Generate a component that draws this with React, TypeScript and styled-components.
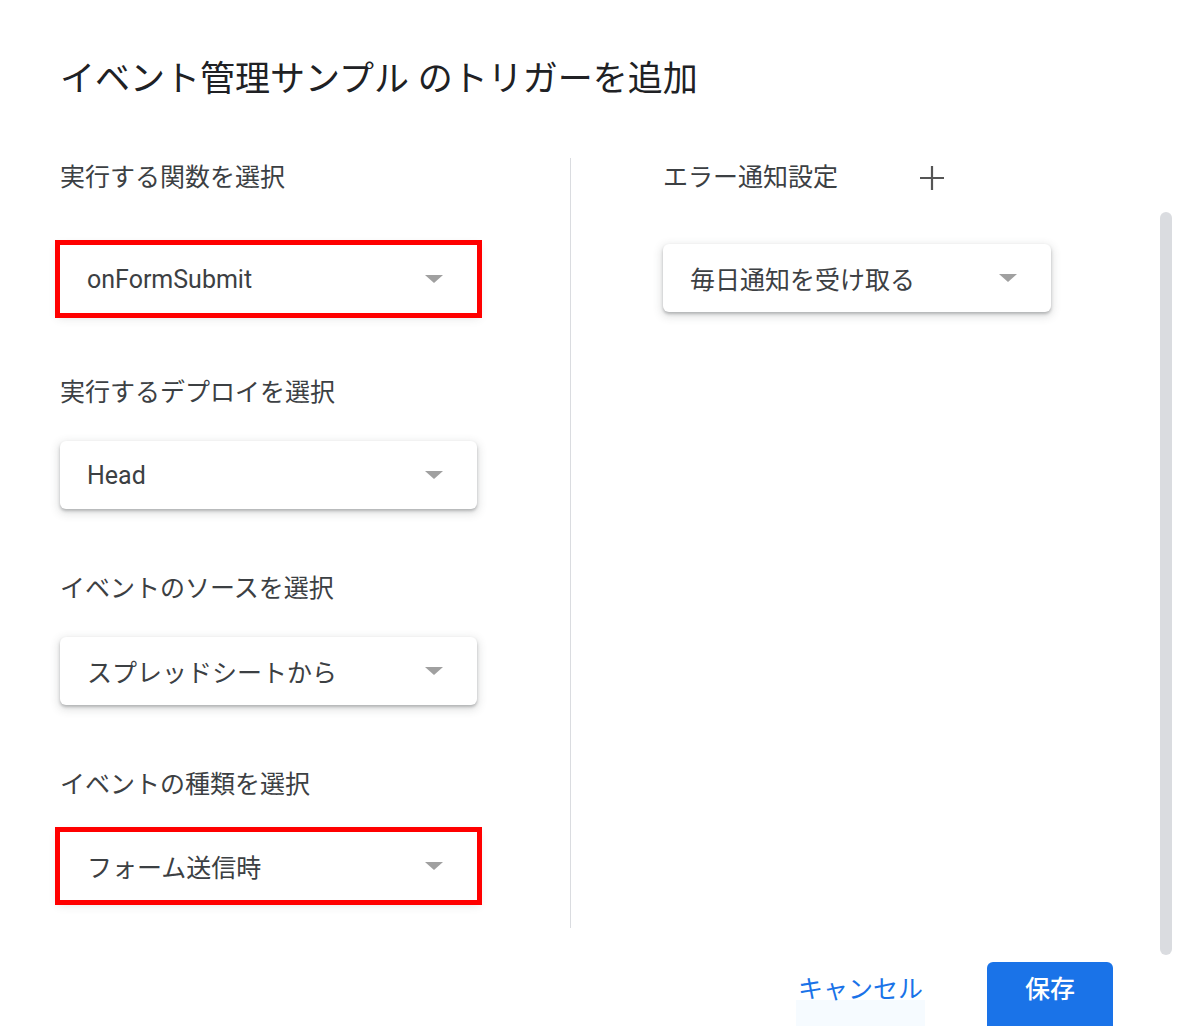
import { FC } from "react";
import styled, { createGlobalStyle } from "styled-components";

const GlobalStyle = createGlobalStyle`
  html, body {
    margin: 0;
    padding: 0;
    background: #ffffff;
  }
  body {
    font-family: Roboto, "Noto Sans CJK JP", sans-serif;
    color: #3c4043;
  }
`;

const Dialog = styled.div`
  width: 1200px;
  height: 1026px;
  overflow: hidden;
  box-sizing: border-box;
  padding: 58px 0 0 60px;
  display: flex;
  flex-direction: column;
`;

const Title = styled.h1`
  margin: 0;
  font-size: 35px;
  font-weight: 400;
  line-height: 44px;
  color: #202124;
  white-space: nowrap;
`;

const Body = styled.div`
  display: flex;
  align-items: stretch;
  margin-top: 56px;
`;

const LeftColumn = styled.div`
  flex-shrink: 0;
  width: 510px;
  display: flex;
  flex-direction: column;
  padding-bottom: 26px;
`;

const RightColumn = styled.div`
  flex-shrink: 0;
  box-sizing: border-box;
  width: 498px;
  border-left: 1px solid #dadce0;
  padding-left: 92px;
  display: flex;
  flex-direction: column;
`;

const Field = styled.div`
  display: flex;
  flex-direction: column;
  margin-bottom: 60px;

  &:last-child {
    margin-bottom: 0;
  }
`;

const Label = styled.div<{ $gap: number }>`
  font-size: 25px;
  line-height: 40px;
  color: #3c4043;
  margin-bottom: ${(props) => props.$gap}px;
  white-space: nowrap;
`;

const HeaderRow = styled.div`
  display: flex;
  align-items: center;
  height: 40px;
  margin-bottom: 46px;
`;

const AddButton = styled.button`
  margin-left: 80px;
  width: 28px;
  height: 28px;
  padding: 0;
  border: none;
  background: transparent;
  display: flex;
  align-items: center;
  justify-content: center;
  cursor: pointer;
`;

const SelectBox = styled.div<{ $width: number; $highlighted?: boolean }>`
  box-sizing: border-box;
  width: ${(props) => props.$width}px;
  height: 68px;
  padding: 0 34px 0 27px;
  display: flex;
  align-items: center;
  justify-content: space-between;
  background: #ffffff;
  border-radius: ${(props) => (props.$highlighted ? "0" : "6px")};
  box-shadow: 0 2px 3px rgba(60, 64, 67, 0.3), 0 3px 9px 2px rgba(60, 64, 67, 0.15);
  outline: ${(props) => (props.$highlighted ? "5px solid #ff0000" : "none")};
  font-size: 25px;
  color: #3c4043;
  white-space: nowrap;
`;

const Arrow = styled.span`
  width: 0;
  height: 0;
  border-left: 9px solid transparent;
  border-right: 9px solid transparent;
  border-top: 8px solid #a0a0a0;
`;

const Scrollbar = styled.div`
  flex-shrink: 0;
  align-self: flex-start;
  width: 12px;
  height: 743px;
  margin: 54px 0 -27px 92px;
  border-radius: 6px;
  background: #dadce0;
`;

const Footer = styled.div`
  display: flex;
  justify-content: flex-end;
  align-items: flex-start;
  gap: 62px;
  padding-right: 87px;
  margin-top: 34px;
`;

const TextButton = styled.button`
  display: flex;
  align-items: flex-start;
  border: none;
  background: linear-gradient(to bottom, #ffffff 0, #ffffff 38px, #f6fbff 38px);
  padding: 0 2px;
  height: 64px;
  font-family: Roboto, "Noto Sans CJK JP", sans-serif;
  font-size: 25px;
  line-height: 56px;
  color: #1a73e8;
  cursor: pointer;
`;

const PrimaryButton = styled.button`
  width: 126px;
  height: 70px;
  border: none;
  border-radius: 6px 6px 0 0;
  background: #1a73e8;
  color: #ffffff;
  font-family: Roboto, "Noto Sans CJK JP", sans-serif;
  font-size: 25px;
  font-weight: 500;
  line-height: 56px;
  padding: 0;
  display: flex;
  justify-content: center;
  align-items: flex-start;
  cursor: pointer;
`;

type SelectProps = {
  value: string;
  width: number;
  highlighted?: boolean;
};

const Select: FC<SelectProps> = ({ value, width, highlighted }) => (
  <SelectBox $width={width} $highlighted={highlighted}>
    <span>{value}</span>
    <Arrow />
  </SelectBox>
);

const fields = [
  { label: "実行する関数を選択", value: "onFormSubmit", gap: 47, highlighted: true },
  { label: "実行するデプロイを選択", value: "Head", gap: 28 },
  { label: "イベントのソースを選択", value: "スプレッドシートから", gap: 28 },
  { label: "イベントの種類を選択", value: "フォーム送信時", gap: 27, highlighted: true },
];

const App: FC = () => {
  return (
    <>
      <GlobalStyle />
      <Dialog>
        <Title>イベント管理サンプル のトリガーを追加</Title>

        <Body>
          <LeftColumn>
            {fields.map((f) => (
              <Field key={f.label}>
                <Label $gap={f.gap}>{f.label}</Label>
                <Select value={f.value} width={417} highlighted={f.highlighted} />
              </Field>
            ))}
          </LeftColumn>

          <RightColumn>
            <HeaderRow>
              <Label $gap={0}>エラー通知設定</Label>
              <AddButton aria-label="追加">
                <svg width="24" height="24" viewBox="0 0 24 24">
                  <path d="M12 0v24M0 12h24" stroke="#555" strokeWidth="2.2" fill="none" />
                </svg>
              </AddButton>
            </HeaderRow>
            <Select value="毎日通知を受け取る" width={388} />
          </RightColumn>

          <Scrollbar />
        </Body>

        <Footer>
          <TextButton>キャンセル</TextButton>
          <PrimaryButton>保存</PrimaryButton>
        </Footer>
      </Dialog>
    </>
  );
};

export default App;
